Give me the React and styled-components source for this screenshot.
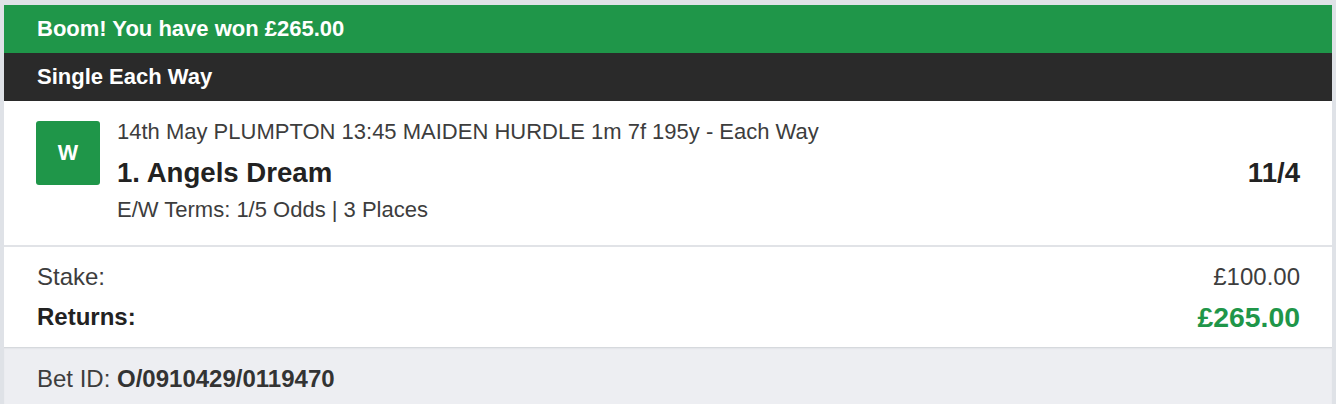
import React from "react";
import styled, { createGlobalStyle } from "styled-components";

const GlobalStyle = createGlobalStyle`
  html, body {
    margin: 0;
    padding: 0;
    background: #dfe2e7;
    font-family: "Liberation Sans", Arial, Helvetica, sans-serif;
  }
`;

const green = "#1f9649";

const Page = styled.div`
  padding: 5px 4px 0 4px;
  height: 404px;
  box-sizing: border-box;
  overflow: hidden;
`;

const Card = styled.div`
  background: #fff;
  display: flex;
  flex-direction: column;
  min-height: 399px;
`;

const Bar = styled.div`
  height: 48px;
  display: flex;
  align-items: center;
  padding: 0 33px;
  background: ${({ $tone }) => ($tone === "win" ? green : "#2a2a2a")};
  color: #fff;
  font-weight: bold;
  font-size: 22px;
`;

const Selection = styled.div`
  display: flex;
  align-items: flex-start;
  padding: 20px 32px 22px 32px;
  border-bottom: 2px solid #e1e3e7;
`;

const Badge = styled.div`
  width: 64px;
  height: 64px;
  border-radius: 3px;
  background: ${green};
  color: #fff;
  font-weight: bold;
  font-size: 21.6px;
  display: flex;
  align-items: center;
  justify-content: center;
  flex-shrink: 0;
  margin-right: 17px;
`;

const Details = styled.div`
  flex: 1;
  display: flex;
  flex-direction: column;
  margin-top: -1px;
`;

const EventLine = styled.div`
  font-size: 22px;
  line-height: 24px;
  color: #3d3d3d;
`;

const NameRow = styled.div`
  display: flex;
  justify-content: space-between;
  align-items: center;
  margin-top: 12px;
  line-height: 34px;
  font-weight: bold;
  font-size: 27.6px;
  color: #222;
`;

const Terms = styled.div`
  margin-top: 7px;
  font-size: 22px;
  line-height: 26px;
  color: #3d3d3d;
`;

const Totals = styled.div`
  display: flex;
  flex-direction: column;
  gap: 12px;
  padding: 16px 32px 16px 33px;
`;

const TotalRow = styled.div`
  display: flex;
  justify-content: space-between;
  align-items: center;
  line-height: 28px;
`;

const Label = styled.span`
  font-size: 24px;
  color: ${({ $strong }) => ($strong ? "#222" : "#3d3d3d")};
  font-weight: ${({ $strong }) => ($strong ? "bold" : "normal")};
`;

const Amount = styled.span`
  font-size: ${({ $strong }) => ($strong ? "28.4px" : "24px")};
  color: ${({ $strong }) => ($strong ? green : "#3d3d3d")};
  font-weight: ${({ $strong }) => ($strong ? "bold" : "normal")};
`;

const Footer = styled.div`
  flex: 1;
  background: #edeef2;
  box-shadow: inset 0 2px 2px -1px #cfd1d5;
  padding: 18px 33px;
  font-size: 24px;
  color: #3d3d3d;

  b {
    color: #333;
  }
`;

export default function App() {
  return (
    <>
      <GlobalStyle />
      <Page>
        <Card>
          <Bar $tone="win">Boom! You have won £265.00</Bar>
          <Bar>Single Each Way</Bar>
          <Selection>
            <Badge>W</Badge>
            <Details>
              <EventLine>14th May PLUMPTON 13:45 MAIDEN HURDLE 1m 7f 195y - Each Way</EventLine>
              <NameRow>
                <span>1. Angels Dream</span>
                <span>11/4</span>
              </NameRow>
              <Terms>E/W Terms: 1/5 Odds | 3 Places</Terms>
            </Details>
          </Selection>
          <Totals>
            <TotalRow>
              <Label>Stake:</Label>
              <Amount>£100.00</Amount>
            </TotalRow>
            <TotalRow>
              <Label $strong>Returns:</Label>
              <Amount $strong>£265.00</Amount>
            </TotalRow>
          </Totals>
          <Footer>
            Bet ID: <b>O/0910429/0119470</b>
          </Footer>
        </Card>
      </Page>
    </>
  );
}
